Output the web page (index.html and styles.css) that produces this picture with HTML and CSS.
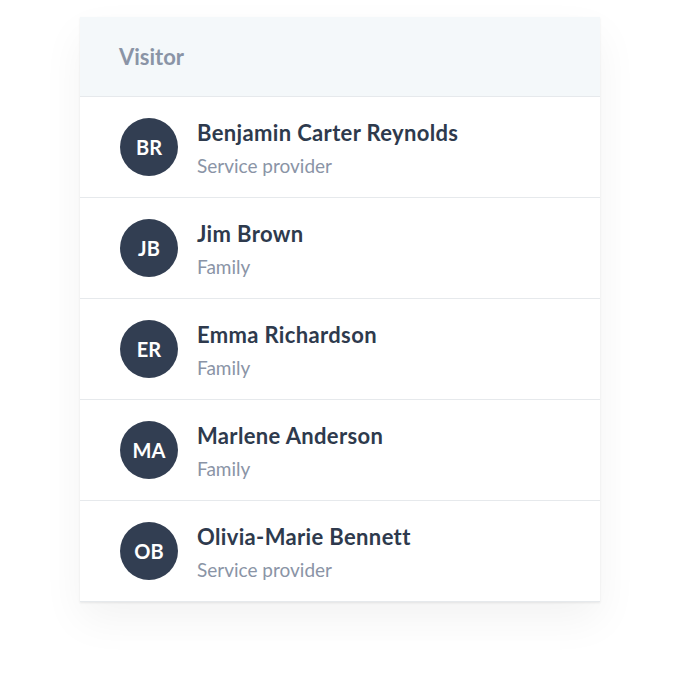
FILE: index.html
```html
<!DOCTYPE html>
<html>
<head>
<meta charset="utf-8">
<link rel="stylesheet" href="styles.css">
</head>
<body>
<div class="card">
  <div class="header">Visitor</div>
  <div class="row">
    <div class="avatar">BR</div>
    <div class="info"><div class="name">Benjamin Carter Reynolds</div><div class="role">Service provider</div></div>
  </div>
  <div class="row">
    <div class="avatar">JB</div>
    <div class="info"><div class="name">Jim Brown</div><div class="role">Family</div></div>
  </div>
  <div class="row">
    <div class="avatar">ER</div>
    <div class="info"><div class="name">Emma Richardson</div><div class="role">Family</div></div>
  </div>
  <div class="row">
    <div class="avatar">MA</div>
    <div class="info"><div class="name">Marlene Anderson</div><div class="role">Family</div></div>
  </div>
  <div class="row">
    <div class="avatar">OB</div>
    <div class="info"><div class="name">Olivia-Marie Bennett</div><div class="role">Service provider</div></div>
  </div>
</div>
</body>
</html>
```
FILE: styles.css
```css
html, body { margin: 0; padding: 0; background: #fff; }
body { font-family: Lato, "Open Sans", sans-serif; width: 680px; height: 680px; }
.card {
  margin: 17px 0 0 80px;
  width: 520px;
  background: #fff;
  box-shadow: 0 1px 2px rgba(0,0,0,0.08), 0 18px 40px rgba(0,0,0,0.05);
}
.header {
  height: 79px;
  background: #f4f8fa;
  border-bottom: 1px solid #e6e9ec;
  box-sizing: content-box;
  display: flex;
  align-items: center;
  padding-left: 39px;
  font-size: 22px;
  font-weight: 700;
  color: #8a94a6;
}
.row {
  height: 100px;
  border-bottom: 1px solid #e6e9ec;
  display: flex;
  align-items: center;
  padding-left: 40px;
  gap: 19px;
}
.avatar {
  width: 58px; height: 58px; border-radius: 50%;
  background: #323e52; color: #fff;
  display: flex; align-items: center; justify-content: center;
  font-size: 20px; font-weight: 700;
  flex: none;
}
.info { display: flex; flex-direction: column; gap: 8px; margin-top: 3px; }
.name { font-size: 22px; font-weight: 700; color: #2e3a4d; line-height: 26px; letter-spacing: 0.35px; }
.role { font-size: 19px; color: #8a94a6; line-height: 24px; }
```
